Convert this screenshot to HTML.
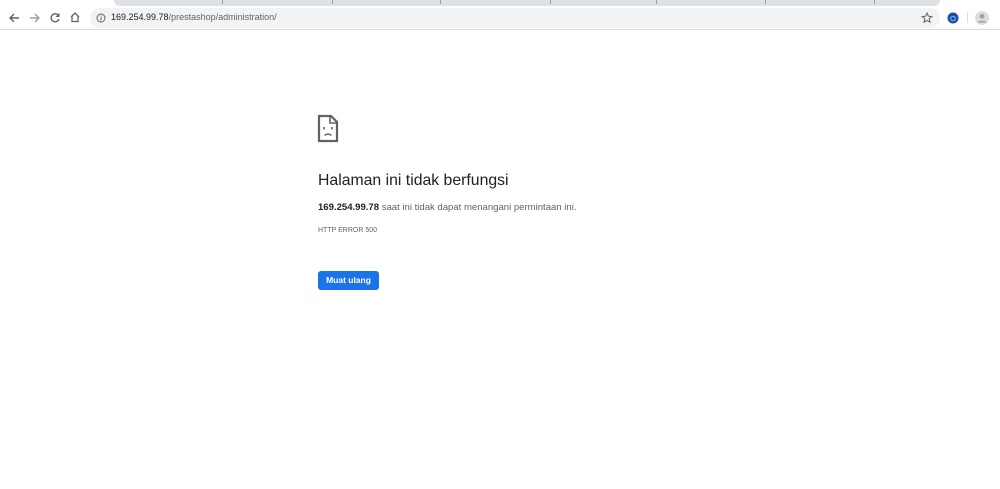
<!DOCTYPE html>
<html><head><meta charset="utf-8"><style>
*{margin:0;padding:0;box-sizing:border-box}
body{width:1000px;height:489px;background:#fff;font-family:"Liberation Sans",sans-serif;position:relative;overflow:hidden}
.strip{position:absolute;left:0;top:0;width:1000px;height:7px;background:#fff}
.tabs{position:absolute;left:114px;top:0;width:826px;height:6px;background:#dee1e6;border-radius:0 0 6px 6px}
.sep{position:absolute;top:0;width:1px;height:4px;background:#9aa0a6}
.bar{position:absolute;left:90px;top:8px;width:850px;height:20px;background:#f1f3f4;border-radius:10px}
.line{position:absolute;left:0;top:29px;width:1000px;height:1px;background:#dadce0}
.url{position:absolute;left:111px;top:12px;font-size:9px;color:#202124}
.url span{color:#5f6368}
svg{position:absolute}
h1{position:absolute;left:318px;top:172px;font-size:15.8px;font-weight:normal;color:#202124}
.p1{position:absolute;left:318px;top:202px;font-size:9.55px;color:#5f6368}
.p1 b{color:#202124}
.p2{position:absolute;left:318px;top:227px;font-size:7px;color:#5f6368}
.btn{position:absolute;left:318px;top:271px;width:61px;height:19px;background:#1a73e8;border-radius:3px;color:#fff;font-size:8.5px;font-weight:bold;text-align:center;line-height:19px}
</style></head><body>
<div class="strip"></div><div class="tabs"></div>
<div class="sep" style="left:222px"></div><div class="sep" style="left:332px"></div><div class="sep" style="left:440px"></div><div class="sep" style="left:550px"></div><div class="sep" style="left:656px"></div><div class="sep" style="left:765px"></div><div class="sep" style="left:874px"></div>
<svg style="left:8px;top:12px" width="12" height="12" viewBox="0 0 12 12"><path d="M11 6H2M6 2L2 6l4 4" stroke="#5f6368" stroke-width="1.4" fill="none"/></svg>
<svg style="left:29px;top:12px" width="12" height="12" viewBox="0 0 12 12"><path d="M1 6h9M6 2l4 4-4 4" stroke="#9aa0a6" stroke-width="1.4" fill="none"/></svg>
<svg style="left:49px;top:12px" width="12" height="12" viewBox="0 0 12 12"><path d="M9.5 3.5A4 4 0 1 0 10 7" stroke="#5f6368" stroke-width="1.4" fill="none"/><path d="M10.5 1v4h-4z" fill="#5f6368"/></svg>
<svg style="left:69px;top:11px" width="12" height="12" viewBox="0 0 12 12"><path d="M2 6l4-4 4 4M3 5v5.5h6V5" stroke="#5f6368" stroke-width="1.3" fill="none"/></svg>
<div class="bar"></div>
<svg style="left:96px;top:13px" width="10" height="10" viewBox="0 0 10 10"><circle cx="5" cy="5" r="4" stroke="#5f6368" stroke-width="1" fill="none"/><path d="M5 4.3v3M5 2.5v1" stroke="#5f6368" stroke-width="1.1"/></svg>
<div class="url">169.254.99.78<span>/prestashop/administration/</span></div>
<svg style="left:921px;top:12px" width="12" height="12" viewBox="0 0 12 12"><path d="M6 1l1.4 3.2 3.4.3-2.6 2.3.8 3.4L6 8.4 3 10.2l.8-3.4L1.2 4.5l3.4-.3z" stroke="#5f6368" stroke-width="1" fill="none"/></svg>
<svg style="left:947px;top:12px" width="12" height="12" viewBox="0 0 12 12"><circle cx="6" cy="6" r="5.5" fill="#1a4fa0"/><circle cx="6" cy="6.5" r="2.3" stroke="#8ab4f8" stroke-width="1" fill="none"/></svg>
<div style="position:absolute;left:967px;top:12px;width:1px;height:11px;background:#dadce0"></div>
<svg style="left:975px;top:11px" width="14" height="14" viewBox="0 0 14 14"><circle cx="7" cy="7" r="7" fill="#dadce0"/><circle cx="7" cy="5.3" r="2.3" fill="#9aa0a6"/><path d="M2.8 11.5c1-2.3 7.4-2.3 8.4 0" fill="#9aa0a6"/></svg>
<div class="line"></div>
<svg style="left:317px;top:114px" width="23" height="29" viewBox="0 0 23 29"><path d="M2 2h12l6 6v19H2z" stroke="#5f6368" stroke-width="2.2" fill="none"/><path d="M13 2v7h7" stroke="#5f6368" stroke-width="1.6" fill="none"/><path d="M7 13v2.5M15 13v2.5" stroke="#5f6368" stroke-width="1.6"/><path d="M7.5 21.5q3.5-3 7 0" stroke="#5f6368" stroke-width="1.4" fill="none"/></svg>
<h1>Halaman ini tidak berfungsi</h1>
<div class="p1"><b>169.254.99.78</b> saat ini tidak dapat menangani permintaan ini.</div>
<div class="p2">HTTP ERROR 500</div>
<div class="btn">Muat ulang</div>
</body></html>
